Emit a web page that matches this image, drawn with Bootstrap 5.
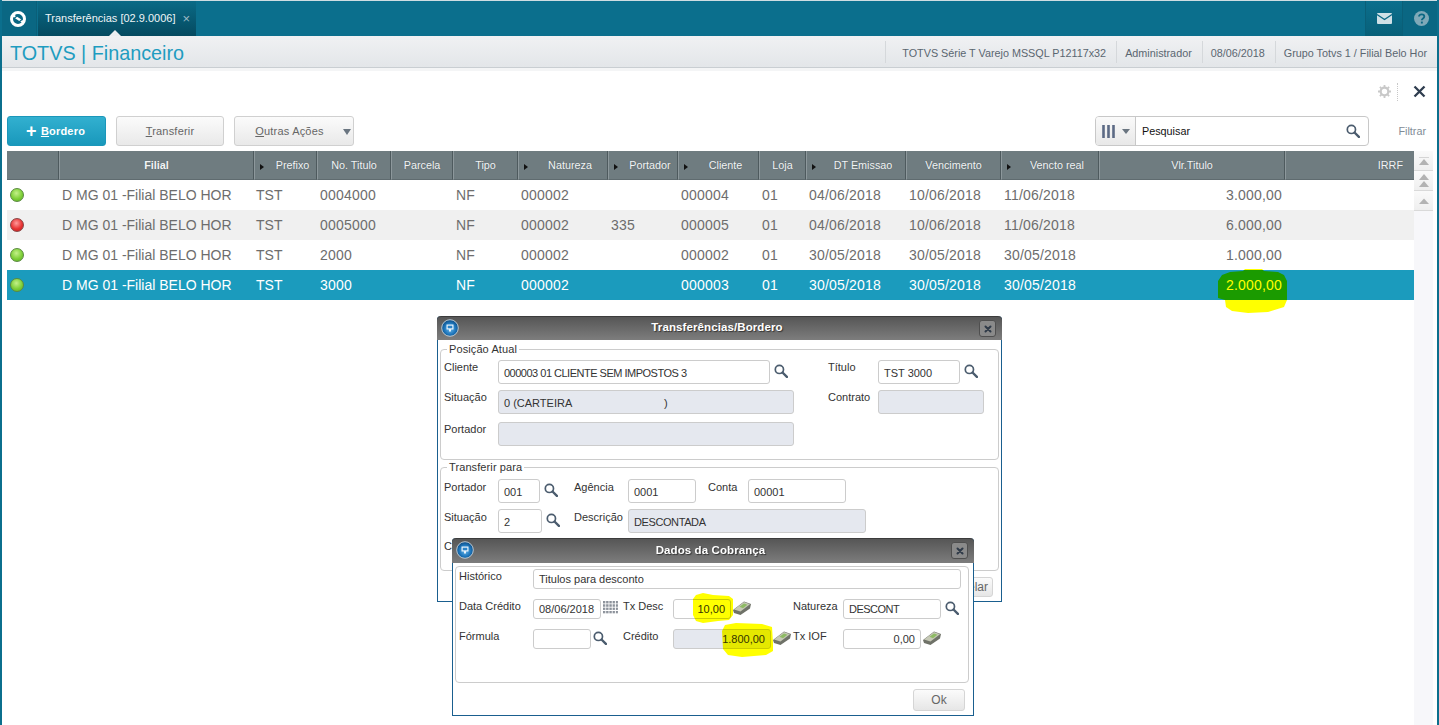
<!DOCTYPE html>
<html lang="pt-BR">
<head>
<meta charset="utf-8">
<title>TOTVS | Financeiro</title>
<link href="https://cdn.jsdelivr.net/npm/bootstrap@5.3.0/dist/css/bootstrap.min.css" rel="stylesheet">
<style>
html,body{height:100%;margin:0;overflow:hidden;background:#fff}
body{font-family:"Liberation Sans",Arial,sans-serif;font-size:12px;color:#333}
.sprite{position:absolute;width:0;height:0}
.app-root{position:relative;width:1439px;height:725px;overflow:hidden;border-left:2px solid #0b6f8d;border-right:2px solid #0b6f8d;background:#fff}
.top-bar{height:36px;margin-left:-2px;margin-right:-2px;background:#0b6f8d;border-top:1px solid #cfdde2}
.logo-cell{width:37px;background:#0a6783;border-right:1px solid #0a5f78}
.tab-cell{width:158px;margin-left:1px;background:linear-gradient(#0a6a86,#054a60);color:#eef5f7;font-size:11px;position:relative;padding-left:7px}
.tab-cell::after{content:"";position:absolute;left:71px;bottom:0;border:6px solid transparent;border-bottom-color:#eceef0;border-top:0}
.tab-x{color:#9dbac5;font-size:13px;margin-left:7px;line-height:1}
.top-btn{width:37px;background:#0a6783;border-left:1px solid #0a5f78}
.top-btn.grad{background:linear-gradient(#0b6f8d,#086079)}
.sub-bar{height:32px;background:linear-gradient(#f0f1f3,#e3e6e9);border-bottom:1px solid #c9ced2;padding-left:8px}
.app-name{font-size:19.8px;color:#1e9cc0;line-height:31px;padding-top:3px}
.sub-item{border-left:1px solid #d5d8db;height:22px;line-height:24px;font-size:10.8px;color:#5a6670;padding:0 10px 0 16px}
.sub-band{height:3px;background:#f4f5f6}
.tool-row{height:45px;padding-right:11px;padding-bottom:4px}
.dot-sep{height:18px;border-left:1px dotted #c8c8c8;margin:0 15px 0 6px}
.act-row{height:30px;padding-left:5px;padding-right:11px;margin-bottom:5px}
.tb-btn{height:30px;padding:0;font-size:11px;border-radius:3px;border:1px solid #d0d0d0;background:linear-gradient(#fbfbfb,#e9e9e9);color:#666;letter-spacing:.2px}
.tb-btn:hover{background:#eee;color:#666}
.btn-main{width:99px;background:linear-gradient(#32b0d0,#1998bb);border-color:#1b97ba;color:#fff;font-weight:700;padding-right:2px}
.btn-main:hover{background:#1998bb;color:#fff}
.btn-plus{font-size:18px;line-height:1;font-weight:700;vertical-align:-2px;margin-right:1px}
.btn-trans{width:108px;margin-left:10px}
.btn-more{width:120px;margin-left:10px;position:relative;padding-right:9px}
.caret-d{position:absolute;right:2px;top:12px;border:4px solid transparent;border-top:6px solid #6a7580;border-bottom:0}
.search-box{width:274px;height:30px;border:1px solid #c8c8c8;border-radius:4px;overflow:hidden;background:#fff}
.search-seg{width:40px;border-right:1px solid #c8c8c8;background:linear-gradient(#fafafa,#e8e8e8);padding-left:6px}
.search-txt{font-size:10.8px;color:#111;padding-left:6px}
.filter-lnk{font-size:10.8px;color:#7f8c96;width:57px;text-align:right}
.grid-wrap{position:relative;padding-left:5px;height:574px}
.data-tbl{width:1407px;table-layout:fixed;margin:0;border-collapse:separate;border-spacing:0;--bs-table-bg:transparent}
.data-tbl th{height:29px;background:#6f7c80;color:#f2f4f5;font-weight:400;font-size:10.8px;text-align:center;padding:0 3px;border:0;border-left:1px solid #8d989c;border-right:1px solid #4e5a5e;border-bottom:1px solid #5f6b6f;position:relative;vertical-align:middle;text-shadow:0 0 1px #4e5a5e}
.data-tbl th:first-child{border-left:0}
.data-tbl th.strong{font-weight:700}
.data-tbl th.arrow{padding-left:17px}
.data-tbl th.arrow::before{content:"";position:absolute;left:5px;top:13px;border:3.5px solid transparent;border-left:4px solid #111;border-right:0}
.data-tbl th:last-child{border-right:0;text-align:right;padding-right:11px}
.data-tbl td{height:30px;padding:0 3px;border:0;font-size:14px;color:#6d6d6d;vertical-align:middle;white-space:nowrap;overflow:hidden;background:#fff}
.data-tbl td:nth-child(3){padding-left:2px}
.data-tbl td:nth-child(n+4){letter-spacing:.2px}
.data-tbl tr.alt td{background:#f0f0f0}
.data-tbl tr.sel td{background:#1b9bbd;color:#fff}
.data-tbl td.num{text-align:right}
.c1{width:52px}.c2{width:195px}.c3{width:63px}.c4{width:74px}.c5{width:62px}.c6{width:65px}.c7{width:90px}.c8{width:70px}.c9{width:81px}.c10{width:47px}.c11{width:100px}.c12{width:95px}.c13{width:98px}.c14{width:186px}.c15{width:129px}
.lamp{display:block;width:14px;height:14px;border-radius:50%;border:1px solid #5a8a40}
.lamp.ok{background:radial-gradient(circle at 45% 35%,#c4f08a,#7fd038 55%,#5aa825)}
.lamp.bad{background:radial-gradient(circle at 45% 35%,#ff9a9a,#e83434 55%,#b81c1c);border-color:#8a4545}
.scroll-col{position:absolute;left:1412px;top:0;width:19px;height:100%;background:#f7f7fa}
.sc-btn{height:20px;width:19px;background:linear-gradient(#fafafa,#efefef);border-bottom:1px solid #d9d9d9;display:flex;align-items:center;justify-content:center}
.win{position:absolute;background:#fff;border:1px solid #1a5f8f;border-top:0;border-radius:4px 4px 0 0}
.win-a{left:435px;top:316px;width:565px;height:286px;z-index:2}
.win-b{left:450px;top:538px;width:522px;height:178px;z-index:3}
.win-title{height:24px;margin:0 -1px;background:linear-gradient(#565656,#7d7d7d);border-top:1px solid #3c3c3c;border-radius:4px 4px 0 0;color:#fff;font-size:11.5px;letter-spacing:.1px;font-weight:700;text-align:center;line-height:21px;padding-right:5px;position:relative;text-shadow:1px 1px 1px #333}
.win-b .win-title{height:25px;line-height:22px}
.win-globe{position:absolute;left:4px;top:2px;width:18px;height:18px}
.win-close{position:absolute;right:6px;top:3px;width:17px;height:17px;border:1px solid #4f4f4f;border-radius:3px;background:#8a8a8a;display:flex;align-items:center;justify-content:center}
.win-body{padding:2px 2px 0 2px}
.box{border:1px solid #ccc;border-radius:4px;padding:4px 0 0 3px;margin:0;min-width:0}
.box legend{float:none;width:auto;font-size:11px;line-height:14px;margin:0 0 0 3px;padding:0 2px;color:#333;letter-spacing:.1px}
.box-a{height:118px}
.box-b{height:111px;padding-top:5px}
.box-c{height:117px;padding:2px 0 0 3px;margin:1px 2px 0 0}
.row-f{display:grid;font-size:11px;color:#333}
.gap-a{margin-bottom:6px}.gap-b{margin-bottom:8px}.gap-c{margin-bottom:10px}
.g1{grid-template-columns:54px 272px 58px 50px 82px 24px}
.g2{grid-template-columns:54px 296px 34px 50px 106px}
.g3{grid-template-columns:54px 296px}
.g4{grid-template-columns:54px 42px 34px 54px 68px 12px 40px 98px}
.g5{grid-template-columns:54px 44px 32px 54px 238px}
.g6{grid-template-columns:74px 428px}
.g7{grid-template-columns:74px 68px 22px 50px 58px 62px 50px 98px 22px}
.g8{grid-template-columns:74px 58px 32px 50px 98px 22px 50px 78px 22px}
.lbl{line-height:14px;white-space:nowrap;overflow:visible}
.g4 .lbl,.g5 .lbl{padding-top:1px}
.fld{height:24px;min-height:0;padding:0 5px;font-size:11px;line-height:24px;border:1px solid #ccc;border-radius:3px;color:#333;background:#fff;white-space:nowrap;overflow:hidden}
.win-b .fld{height:20px;line-height:19px}
.fld.off{background:#e5e8ef}
.fld.r{text-align:right}
.tight{letter-spacing:-.5px}
.tight2{letter-spacing:-.4px}
.ico-cell{padding:4px 0 0 4px;line-height:0}
.win-b .ico-cell{padding:2px 0 0 2px}
.win-b .ico-s{padding-left:4px}
.win-foot{padding-top:6px;padding-right:6px}
.dlg-btn{height:20px;width:58px;padding:0;font-size:12px;color:#666;background:linear-gradient(#fbfbfb,#e6e6e6);border:1px solid #d5d5d5;border-radius:3px}
.dlg-ok{width:52px;height:22px}
.win-b .win-foot{padding-top:6px;padding-right:6px}
.hl{position:absolute;background:#ff0;mix-blend-mode:multiply;z-index:5}
.hl-grid{left:1216px;top:118px;width:71px;height:44px;clip-path:polygon(27px 0,44px 0,46px 2px,60px 3px,66px 6px,69px 12px,69px 31px,66px 38px,50px 43px,30px 44px,14px 42px,8px 38px,7px 31px,0 29px,0 12px,4px 6px,12px 3px,25px 2px)}
.hl-tx{left:240px;top:55px;width:42px;height:30px;clip-path:polygon(3px 2px,10px 0,20px 2px,36px 3px,40px 6px,40px 22px,36px 27px,25px 28px,10px 30px,3px 28px,0 22px,0 6px)}
.hl-cr{left:269px;top:85px;width:52px;height:34px;clip-path:polygon(3px 2px,14px 0,40px 1px,50px 4px,51px 20px,51px 28px,44px 32px,20px 34px,6px 32px,1px 26px,0 8px)}
</style>
</head>
<body>
<svg class="sprite" aria-hidden="true">
<defs>
<radialGradient id="g-globe" cx="50%" cy="55%" r="55%"><stop offset="0" stop-color="#6db8e8"/><stop offset=".6" stop-color="#1f78be"/><stop offset="1" stop-color="#0e4a80"/></radialGradient>
<symbol id="i-search" viewBox="0 0 14 14"><circle cx="5.400" cy="5.400" r="4.100" fill="none" stroke="#4b5c6e" stroke-width="1.700"/><path d="M8.500 8.500l4.400 4.400" stroke="#4b5c6e" stroke-width="2.400" stroke-linecap="round"/></symbol>
<symbol id="i-money" viewBox="0 0 18 14"><path d="M0 9L11 .5 18 3l-1 4.500L7.500 14 1 12z" fill="#6f7268"/><path d="M1 8.500L11 1l6 2.300-9.500 7.200z" fill="#c6c9b6"/><path d="M6.500 5.800l4.500-3.300 3.500 1.300-4.500 3.400z" fill="#8ebb64"/></symbol>
<symbol id="i-globe" viewBox="0 0 18 18"><circle cx="9" cy="9" r="8.300" fill="url(#g-globe)" stroke="#c4d2dc" stroke-width=".9"/><path d="M5.500 5.500h7v5h-2.500v2h-2v-2h-2.500z" fill="#e8f3fb"/><rect x="6.700" y="6.700" width="4.600" height="2.600" fill="#2b83c6"/></symbol>
<symbol id="i-x" viewBox="0 0 10 10"><path d="M2.500 2.500l5 5M7.500 2.500l-5 5" stroke="#2f3a48" stroke-width="2" stroke-linecap="round"/></symbol>
<symbol id="i-up" viewBox="0 0 12 6"><path d="M1 6l5-5.500L11 6z" fill="#b3b3b3"/></symbol>
<pattern id="cal-p" width="3.200" height="3.300" patternUnits="userSpaceOnUse"><rect width="2.300" height="2.400" fill="#8a9099"/></pattern>
</defs>
</svg>
<div class="app-root">
  <header class="top-bar d-flex">
    <div class="logo-cell d-flex align-items-center justify-content-center">
      <svg width="18" height="18" viewBox="0 0 18 18"><circle cx="9" cy="9" r="6.500" fill="none" stroke="#fff" stroke-width="3"/><path d="M4 5.500l10 6.500" stroke="#fff" stroke-width="2.400"/><path d="M5 8.500l3-2.500M13 9.500l-3 2.500" stroke="#0a6783" stroke-width="1.200"/></svg>
    </div>
    <div class="tab-cell d-flex align-items-center"><span>Transferências [02.9.0006]</span><span class="tab-x">×</span></div>
    <div class="ms-auto d-flex">
      <div class="top-btn grad d-flex align-items-center justify-content-center">
        <svg width="15" height="11" viewBox="0 0 15 11"><rect width="15" height="11" rx="1" fill="#cfe0e6"/><path d="M0 1.500l7.500 5 7.500-5" fill="none" stroke="#0a6783" stroke-width="1.300"/></svg>
      </div>
      <div class="top-btn d-flex align-items-center justify-content-center">
        <svg width="15" height="15" viewBox="0 0 15 15"><circle cx="7.500" cy="7.500" r="7.500" fill="#7fa9b8"/><path d="M5 5.600c0-3.100 5.300-3.100 5.300 0 0 2-2.500 1.800-2.500 3.700" fill="none" stroke="#0a6783" stroke-width="1.800"/><rect x="6.900" y="10.600" width="1.900" height="1.900" fill="#0a6783"/></svg>
      </div>
    </div>
  </header>
  <div class="sub-bar d-flex align-items-center">
    <div class="app-name">TOTVS | Financeiro</div>
    <div class="ms-auto d-flex align-items-center">
      <div class="sub-item">TOTVS Série T Varejo MSSQL P12117x32</div>
      <div class="sub-item ps-2">Administrador</div>
      <div class="sub-item ps-2">08/06/2018</div>
      <div class="sub-item ps-2">Grupo Totvs 1 / Filial Belo Hor</div>
    </div>
  </div>
  <div class="sub-band"></div>
  <div class="tool-row d-flex align-items-center justify-content-end">
    <svg width="13" height="13" viewBox="0 0 13 13"><circle cx="6.500" cy="6.500" r="3.800" fill="none" stroke="#c9c9c9" stroke-width="2.200"/><path d="M6.500 0v2.500M6.500 10.500V13M0 6.500h2.500M10.500 6.500H13M1.900 1.900l1.700 1.700M9.400 9.400l1.700 1.700M11.100 1.900L9.400 3.600M3.600 9.400l-1.700 1.700" stroke="#c9c9c9" stroke-width="1.800"/></svg>
    <span class="dot-sep"></span>
    <svg width="13" height="13" viewBox="0 0 13 13"><path d="M1.500 1.500l10 10M11.500 1.500l-10 10" stroke="#2f3d4f" stroke-width="2.300"/></svg>
  </div>
  <div class="act-row d-flex align-items-center">
    <button type="button" class="btn tb-btn btn-main"><span class="btn-plus">+</span> <u>B</u>ordero</button>
    <button type="button" class="btn tb-btn btn-trans"><u>T</u>ransferir</button>
    <button type="button" class="btn tb-btn btn-more"><u>O</u>utras Ações<span class="caret-d"></span></button>
    <div class="search-box d-flex ms-auto">
      <div class="search-seg d-flex align-items-center gap-1">
        <svg width="16" height="13" viewBox="0 0 16 13"><path d="M1.500 0v13M6.500 0v13M11.500 0v13" stroke="#5c6a85" stroke-width="2.600"/></svg>
        <svg width="8" height="5" viewBox="0 0 8 5"><path d="M0 0h8L4 5z" fill="#6a7580"/></svg>
      </div>
      <div class="search-txt flex-grow-1 d-flex align-items-center">Pesquisar</div>
      <div class="d-flex align-items-center pe-2"><svg width="14" height="14"><use href="#i-search"/></svg></div>
    </div>
    <div class="filter-lnk">Filtrar</div>
  </div>
  <div class="grid-wrap">
    <table class="table data-tbl">
      <colgroup><col class="c1"><col class="c2"><col class="c3"><col class="c4"><col class="c5"><col class="c6"><col class="c7"><col class="c8"><col class="c9"><col class="c10"><col class="c11"><col class="c12"><col class="c13"><col class="c14"><col class="c15"></colgroup>
      <thead><tr>
        <th></th><th class="strong">Filial</th><th class="arrow">Prefixo</th><th>No. Titulo</th><th>Parcela</th><th>Tipo</th><th class="arrow">Natureza</th><th class="arrow">Portador</th><th class="arrow">Cliente</th><th>Loja</th><th class="arrow">DT Emissao</th><th>Vencimento</th><th class="arrow">Vencto real</th><th>Vlr.Titulo</th><th>IRRF</th>
      </tr></thead>
      <tbody>
        <tr><td><span class="lamp ok"></span></td><td>D MG 01 -Filial BELO HOR</td><td>TST</td><td>0004000</td><td></td><td>NF</td><td>000002</td><td></td><td>000004</td><td>01</td><td>04/06/2018</td><td>10/06/2018</td><td>11/06/2018</td><td class="num">3.000,00</td><td></td></tr>
        <tr class="alt"><td><span class="lamp bad"></span></td><td>D MG 01 -Filial BELO HOR</td><td>TST</td><td>0005000</td><td></td><td>NF</td><td>000002</td><td>335</td><td>000005</td><td>01</td><td>04/06/2018</td><td>10/06/2018</td><td>11/06/2018</td><td class="num">6.000,00</td><td></td></tr>
        <tr><td><span class="lamp ok"></span></td><td>D MG 01 -Filial BELO HOR</td><td>TST</td><td>2000</td><td></td><td>NF</td><td>000002</td><td></td><td>000002</td><td>01</td><td>30/05/2018</td><td>30/05/2018</td><td>30/05/2018</td><td class="num">1.000,00</td><td></td></tr>
        <tr class="sel"><td><span class="lamp ok"></span></td><td>D MG 01 -Filial BELO HOR</td><td>TST</td><td>3000</td><td></td><td>NF</td><td>000002</td><td></td><td>000003</td><td>01</td><td>30/05/2018</td><td>30/05/2018</td><td>30/05/2018</td><td class="num">2.000,00</td><td></td></tr>
      </tbody>
    </table>
    <div class="scroll-col">
      <div class="sc-btn"><svg width="12" height="8" viewBox="0 0 12 8"><path d="M1 0h10" stroke="#b3b3b3"/><path d="M1 8l5-6 5 6z" fill="#b3b3b3"/></svg></div>
      <div class="sc-btn"><svg width="12" height="13" viewBox="0 0 12 13"><path d="M1 6l5-6 5 6z" fill="#b3b3b3"/><path d="M1 13l5-6 5 6z" fill="#b3b3b3"/></svg></div>
      <div class="sc-btn"><svg width="12" height="6"><use href="#i-up"/></svg></div>
    </div>
    <span class="hl hl-grid"></span>
  </div>

  <section class="win win-a">
    <div class="win-title">Transferências/Bordero
      <svg class="win-globe"><use href="#i-globe"/></svg>
      <span class="win-close"><svg width="10" height="10"><use href="#i-x"/></svg></span>
    </div>
    <div class="win-body">
      <fieldset class="box box-a">
        <legend>Posição Atual</legend>
        <div class="row-f g1 gap-a"><div class="lbl">Cliente</div><div class="fld"><span class="tight">000003 01 CLIENTE SEM IMPOSTOS 3</span></div><div class="ico-cell"><svg width="14" height="14"><use href="#i-search"/></svg></div><div class="lbl">Título</div><div class="fld">TST 3000</div><div class="ico-cell"><svg width="14" height="14"><use href="#i-search"/></svg></div></div>
        <div class="row-f g2 gap-b"><div class="lbl">Situação</div><div class="fld off">0 (CARTEIRA&nbsp;&nbsp;&nbsp;&nbsp;&nbsp;&nbsp;&nbsp;&nbsp;&nbsp;&nbsp;&nbsp;&nbsp;&nbsp;&nbsp;&nbsp;&nbsp;&nbsp;&nbsp;&nbsp;&nbsp;&nbsp;&nbsp;&nbsp;&nbsp;&nbsp;&nbsp;&nbsp;&nbsp;&nbsp;&nbsp;)</div><div></div><div class="lbl">Contrato</div><div class="fld off"></div></div>
        <div class="row-f g3"><div class="lbl">Portador</div><div class="fld off"></div></div>
      </fieldset>
      <fieldset class="box box-b">
        <legend>Transferir para</legend>
        <div class="row-f g4 gap-a"><div class="lbl">Portador</div><div class="fld">001</div><div class="ico-cell"><svg width="14" height="14"><use href="#i-search"/></svg></div><div class="lbl">Agência</div><div class="fld">0001</div><div></div><div class="lbl">Conta</div><div class="fld">00001</div></div>
        <div class="row-f g5 gap-a"><div class="lbl">Situação</div><div class="fld">2</div><div class="ico-cell"><svg width="14" height="14"><use href="#i-search"/></svg></div><div class="lbl">Descrição</div><div class="fld off"><span class="tight2">DESCONTADA</span></div></div>
        <div class="row-f"><div class="lbl">Carteira</div></div>
      </fieldset>
      <div class="win-foot d-flex justify-content-end"><button type="button" class="btn dlg-btn">Cancelar</button></div>
    </div>
  </section>

  <section class="win win-b">
    <div class="win-title">Dados da Cobrança
      <svg class="win-globe"><use href="#i-globe"/></svg>
      <span class="win-close"><svg width="10" height="10"><use href="#i-x"/></svg></span>
    </div>
    <div class="win-body">
      <fieldset class="box box-c">
        <div class="row-f g6 gap-c"><div class="lbl">Histórico</div><div class="fld">Titulos para desconto</div></div>
        <div class="row-f g7 gap-c"><div class="lbl">Data Crédito</div><div class="fld">08/06/2018</div><div class="ico-cell"><svg width="15" height="13" viewBox="0 0 15 13"><rect width="15" height="13" fill="url(#cal-p)"/></svg></div><div class="lbl">Tx Desc</div><div class="fld r">10,00</div><div class="ico-cell"><svg width="18" height="14"><use href="#i-money"/></svg></div><div class="lbl">Natureza</div><div class="fld"><span class="tight">DESCONT</span></div><div class="ico-cell ico-s"><svg width="14" height="14"><use href="#i-search"/></svg></div></div>
        <div class="row-f g8"><div class="lbl">Fórmula</div><div class="fld"></div><div class="ico-cell"><svg width="14" height="14"><use href="#i-search"/></svg></div><div class="lbl">Crédito</div><div class="fld off r">1.800,00</div><div class="ico-cell"><svg width="18" height="14"><use href="#i-money"/></svg></div><div class="lbl">Tx IOF</div><div class="fld r">0,00</div><div class="ico-cell"><svg width="18" height="14"><use href="#i-money"/></svg></div></div>
      </fieldset>
      <div class="win-foot d-flex justify-content-end"><button type="button" class="btn dlg-btn dlg-ok">Ok</button></div>
    </div>
    <span class="hl hl-tx"></span>
    <span class="hl hl-cr"></span>
  </section>
</div>
<script src="https://cdn.jsdelivr.net/npm/bootstrap@5.3.0/dist/js/bootstrap.bundle.min.js"></script>
</body>
</html>
